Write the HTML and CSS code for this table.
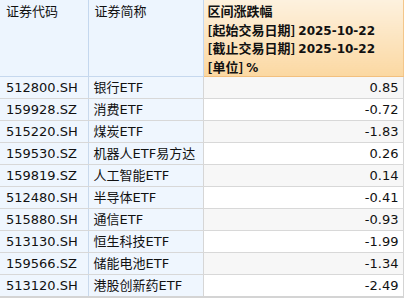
FILE: index.html
```html
<!DOCTYPE html>
<html lang="zh">
<head>
<meta charset="utf-8">
<link rel="stylesheet" href="styles.css">
</head>
<body>
<table class="grid">
  <colgroup>
    <col class="col-code">
    <col class="col-name">
    <col class="col-val">
  </colgroup>
  <thead>
    <tr>
      <th class="h-code">证券代码</th>
      <th class="h-name">证券简称</th>
      <th class="h-val">
        <div class="line">区间涨跌幅</div>
        <div class="line">[起始交易日期] <span class="num">2025-10-22</span></div>
        <div class="line">[截止交易日期] <span class="num">2025-10-22</span></div>
        <div class="line">[单位] <span class="num">%</span></div>
      </th>
    </tr>
  </thead>
  <tbody>
    <tr><td class="c">512800.SH</td><td class="n">银行ETF</td><td class="v">0.85</td></tr>
    <tr><td class="c">159928.SZ</td><td class="n">消费ETF</td><td class="v">-0.72</td></tr>
    <tr><td class="c">515220.SH</td><td class="n">煤炭ETF</td><td class="v">-1.83</td></tr>
    <tr><td class="c">159530.SZ</td><td class="n">机器人ETF易方达</td><td class="v">0.26</td></tr>
    <tr><td class="c">159819.SZ</td><td class="n">人工智能ETF</td><td class="v">0.14</td></tr>
    <tr><td class="c">512480.SH</td><td class="n">半导体ETF</td><td class="v">-0.41</td></tr>
    <tr><td class="c">515880.SH</td><td class="n">通信ETF</td><td class="v">-0.93</td></tr>
    <tr><td class="c">513130.SH</td><td class="n">恒生科技ETF</td><td class="v">-1.99</td></tr>
    <tr><td class="c">159566.SZ</td><td class="n">储能电池ETF</td><td class="v">-1.34</td></tr>
    <tr><td class="c">513120.SH</td><td class="n">港股创新药ETF</td><td class="v">-2.49</td></tr>
  </tbody>
</table>
</body>
</html>
```

FILE: styles.css
```css
html, body {
  margin: 0;
  padding: 0;
  background: #ffffff;
}

.grid {
  border-collapse: collapse;
  table-layout: fixed;
  width: 403px;
  font-family: "DejaVu Sans", "Noto Sans CJK SC", sans-serif;
  font-size: 12px;
  color: #111111;
  border-bottom: 2px solid #d4d4d4;
}

.col-code { width: 88px; }
.col-name { width: 115px; }
.col-val { width: 200px; }

.grid th {
  height: 75px;
  padding: 0;
  vertical-align: top;
  text-align: left;
  font-weight: normal;
  border-bottom: 1px solid #c6d8ee;
}

.h-code {
  background: #edf5fe;
  border-right: 1px solid #c4d7ee;
}

.h-name {
  background: #edf5fe;
  border-right: 1px solid #c4d7ee;
}

.h-code, .h-name {
  padding-left: 6px !important;
  padding-top: 2px !important;
  height: 73px !important;
  font-family: "Noto Sans CJK SC", sans-serif;
  font-size: 13px;
  line-height: 18px;
}

.h-val {
  padding: 2px 0 0 4px !important;
  height: 73px !important;
  background: linear-gradient(#fdf1de, #fbd8a2);
  border-left: 1px solid #f3c68a;
  border-right: 1px solid #f3c68a;
  border-bottom: 1px solid #f2c07f !important;
  font-family: "Noto Sans CJK SC", sans-serif;
  font-weight: bold !important;
  font-size: 13px;
}

.h-val .line {
  height: 18.5px;
  line-height: 18px;
  white-space: nowrap;
  overflow: visible;
}

.h-val .num {
  font-family: "DejaVu Sans", sans-serif;
  font-size: 12px;
  line-height: 1;
}

.grid td {
  height: 21px;
  padding: 0;
  border-bottom: 1px solid #d8d8d8;
  white-space: nowrap;
  line-height: 21px;
  font-size: 13px;
}

.grid td.c {
  padding-left: 6px;
  background: #eff6fe;
  border-right: 1px solid #c9d9ec;
}

.grid td.n {
  padding-left: 5px;
  background: #eff6fe;
  border-right: 1px solid #d6d6d6;
}

.grid td.v {
  padding-right: 4px;
  text-align: right;
  border-right: 1px solid #d4d4d4;
}

.grid tbody tr:nth-child(odd) td.v {
  background: #f7f7f7;
}
```
